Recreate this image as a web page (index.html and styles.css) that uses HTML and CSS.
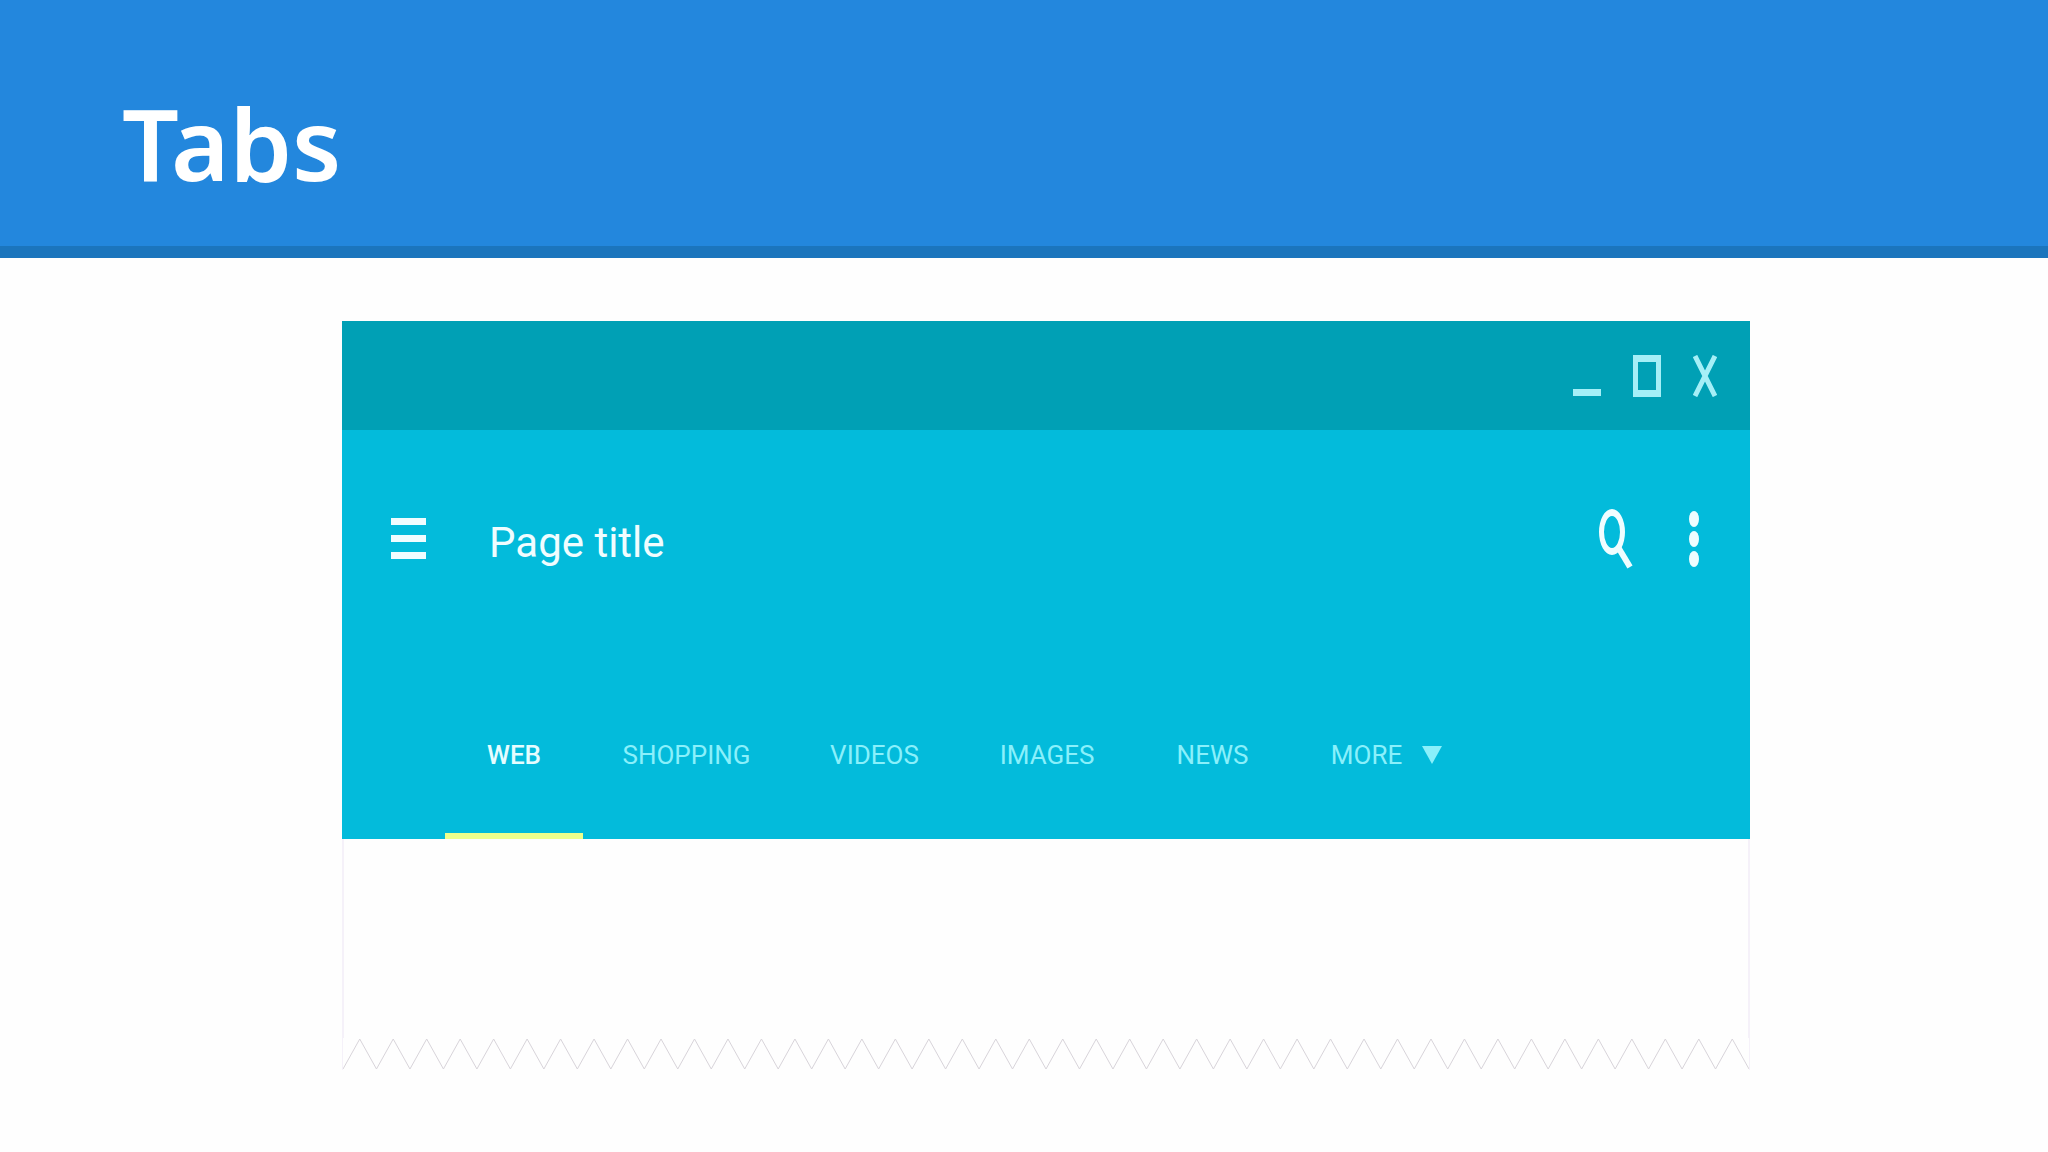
FILE: index.html
```html
<!DOCTYPE html>
<html lang="en">
<head>
<meta charset="utf-8">
<meta name="viewport" content="width=device-width, initial-scale=1">
<title>Tabs</title>
<link rel="stylesheet" href="styles.css">
</head>
<body>
<header class="slide-header"><h1 class="slide-title">Tabs</h1></header>
<main class="slide-body">
  <section class="window" aria-label="App window">
    <div class="titlebar">
      <button class="icon-button" type="button" aria-label="Minimize"><svg width="28" height="42" viewBox="0 0 28 42"><path d="M0 34h28v7H0z" fill="currentColor"/></svg></button>
      <button class="icon-button" type="button" aria-label="Maximize"><svg width="28" height="42" viewBox="0 0 28 42"><path d="M0 0h28v42H0zM5 7v28h18V7z" fill="currentColor" fill-rule="evenodd"/></svg></button>
      <button class="icon-button" type="button" aria-label="Close"><svg width="24" height="42" viewBox="0 0 24 42"><path d="M2 1L22 41M22 1L2 41" fill="none" stroke="currentColor" stroke-width="5"/></svg></button>
    </div>
    <div class="appbar">
      <div class="toolbar">
        <button class="icon-button" type="button" aria-label="Menu"><svg width="36" height="42" viewBox="0 0 36 42"><path d="M0 0h35v7H0zM0 17h35v7H0zM0 34h35v7H0z" fill="currentColor"/></svg></button>
        <h2 class="page-title">Page title</h2>
        <button class="icon-button" type="button" aria-label="Search"><svg width="34" height="60" viewBox="0 0 34 60"><path d="M13 0a13 23 0 0 1 0 46a13 23 0 0 1 0-46zM13 7a8 16 0 0 0 0 32a8 16 0 0 0 0-32z" fill="currentColor" fill-rule="evenodd"/><path d="M19 38L31 58" stroke="currentColor" stroke-width="6"/></svg></button>
        <button class="icon-button" type="button" aria-label="More options"><svg width="10" height="56" viewBox="0 0 10 56"><g fill="currentColor"><ellipse cx="5" cy="8" rx="5" ry="8"/><ellipse cx="5" cy="28" rx="5" ry="8"/><ellipse cx="5" cy="48" rx="5" ry="8"/></g></svg></button>
      </div>
      <div class="tabs" role="tablist">
        <button class="tab tab-active" type="button" role="tab" aria-selected="true">WEB</button>
        <button class="tab" type="button" role="tab" aria-selected="false">SHOPPING</button>
        <button class="tab" type="button" role="tab" aria-selected="false">VIDEOS</button>
        <button class="tab" type="button" role="tab" aria-selected="false">IMAGES</button>
        <button class="tab" type="button" role="tab" aria-selected="false">NEWS</button>
        <button class="tab" type="button" role="tab" aria-selected="false">MORE<svg width="20" height="18" viewBox="0 0 20 18"><path d="M0 0h20L10 18z" fill="currentColor"/></svg></button>
      </div>
    </div>
    <div class="panel" role="tabpanel"></div>
    <svg class="torn-edge" viewBox="0 0 84 32" preserveAspectRatio="none" aria-hidden="true">
      <defs><path id="teeth" d="M0 31l1-30 1 30 1-30 1 30 1-30 1 30 1-30 1 30 1-30 1 30 1-30 1 30"/></defs>
      <use href="#teeth"/><use href="#teeth" x="12"/><use href="#teeth" x="24"/><use href="#teeth" x="36"/><use href="#teeth" x="48"/><use href="#teeth" x="60"/><use href="#teeth" x="72"/>
    </svg>
  </section>
</main>
</body>
</html>
```
FILE: styles.css
```css
* { box-sizing: border-box; }
body {
  margin: 0;
  background: #fefefe;
  font-family: Roboto, sans-serif;
}
.slide-header {
  height: 258px;
  padding: 72px 120px 0 122px;
  background: #2387dd;
  border-bottom: 12px solid #1b75bd;
}
.slide-title {
  margin: 0;
  color: #fff;
  font: 600 100px/140px "Noto Sans", sans-serif;
}
.slide-body { padding: 63px 14.55% 80px 16.7%; }
.titlebar {
  display: flex;
  justify-content: flex-end;
  align-items: center;
  gap: 32px;
  height: 109px;
  padding-right: 33px;
  background: #00a0b5;
  color: #a5eff7;
}
.icon-button {
  display: flex;
  padding: 0;
  border: 0;
  background: none;
  color: inherit;
}
.appbar { background: #03bbdb; color: #f0fdff; }
.toolbar {
  display: flex;
  align-items: center;
  height: 218px;
  padding: 0 51px 0 49px;
}
.page-title {
  flex: 1;
  margin: 0 0 0 62px;
  padding-top: 8px;
  font-size: 42px;
  font-weight: 400;
  line-height: 64px;
}
.toolbar .icon-button + .icon-button { margin-left: 56px; }
.tabs {
  display: grid;
  grid-template-columns: 138fr 207fr 169fr 176fr 155fr 193fr;
  height: 191px;
  margin: 0 267px 0 103px;
}
.tab {
  display: flex;
  align-items: center;
  justify-content: center;
  gap: 20px;
  padding: 28px 0 0;
  border: 0;
  border-bottom: 6px solid transparent;
  background: none;
  color: #8af0fb;
  font: 400 26px/40px Roboto, sans-serif;
}
.tab-active { border-bottom-color: #eeff8c; color: #e5fdff; font-weight: 500; }
.panel {
  height: 199px;
  border: 1px solid #f5f1f9;
  border-width: 0 2px;
}
.torn-edge {
  display: block;
  width: 100%;
  height: 32px;
  border: 1px solid #f5f1f9;
  border-width: 0 1px;
  fill: #fcfafd;
  fill: none;
  stroke: #d8d4da;
}
.torn-edge path { vector-effect: non-scaling-stroke; }
```
